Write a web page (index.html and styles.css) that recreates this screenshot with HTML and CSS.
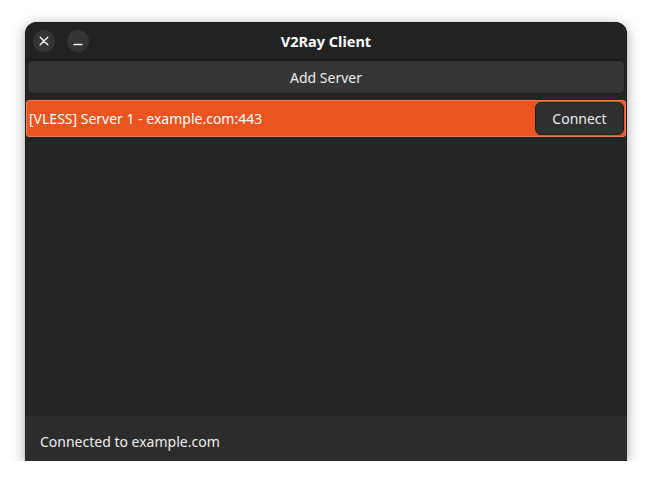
FILE: index.html
```html
<!DOCTYPE html>
<html>
<head>
<meta charset="utf-8">
<link rel="stylesheet" href="styles.css">
</head>
<body>
<div class="window">
  <header class="titlebar">
    <div class="controls">
      <button class="wbtn" aria-label="Close">
        <svg width="10" height="10" viewBox="0 0 10 10"><path d="M1.2 1.2L8.8 8.8M8.8 1.2L1.2 8.8" stroke="#f0f0f0" stroke-width="1.5" stroke-linecap="round"/></svg>
      </button>
      <button class="wbtn" aria-label="Minimize">
        <svg width="10" height="10" viewBox="0 0 10 10"><path d="M1 8.5H9" stroke="#f0f0f0" stroke-width="1.5" stroke-linecap="round"/></svg>
      </button>
    </div>
    <div class="title">V2Ray Client</div>
  </header>
  <main class="content">
    <button class="add-btn">Add Server</button>
    <div class="list">
      <div class="row selected">
        <span class="row-label">[VLESS] Server 1 - example.com:443</span>
        <button class="connect-btn">Connect</button>
      </div>
    </div>
  </main>
  <footer class="status">Connected to example.com</footer>
</div>
</body>
</html>
```
FILE: styles.css
```css
html, body {
  margin: 0;
  padding: 0;
  background: #ffffff;
}
body {
  padding: 22px 25px 0 25px;
  font-family: "Noto Sans", "DejaVu Sans", sans-serif;
  font-size: 14px;
  color: #ffffff;
}
.window {
  width: 602px;
  height: 439px;
  display: flex;
  flex-direction: column;
  background: #242424;
  border-radius: 12px 12px 0 0;
  box-shadow: 0 3px 14px rgba(0, 0, 0, 0.35), 0 0 1px rgba(0,0,0,0.4);
  overflow: hidden;
}
.titlebar {
  height: 37px;
  flex: none;
  background: #222222;
  border-bottom: 1px solid #181818;
  display: flex;
  align-items: center;
  position: relative;
}
.controls {
  display: flex;
  gap: 12px;
  padding-left: 8px;
}
.wbtn {
  width: 22px;
  height: 22px;
  border-radius: 50%;
  border: none;
  background: #343434;
  padding: 0;
  display: flex;
  align-items: center;
  justify-content: center;
}
.title {
  position: absolute;
  left: 0;
  right: 0;
  text-align: center;
  font-weight: bold;
  font-size: 14.5px;
  color: #ffffff;
  pointer-events: none;
}
.content {
  flex: 1;
  display: flex;
  flex-direction: column;
  padding: 0 1px;
}
.add-btn {
  margin: 0 1px;
  height: 34px;
  border: 1px solid #1b1b1b;
  border-radius: 6px;
  background: #363636;
  color: #ececec;
  font-family: inherit;
  font-size: 14px;
}
.list {
  margin-top: 6px;
  flex: 1;
}
.row {
  height: 37px;
  box-sizing: border-box;
  display: flex;
  align-items: center;
  justify-content: space-between;
  padding: 0 1px 0 2px;
  border-radius: 3px;
}
.row.selected {
  background: #e95420;
  border: 1px solid #f07a50;
}
.row-label {
  color: #ffffff;
}
.connect-btn {
  width: 89px;
  height: 33px;
  border: 1px solid #1e1e1e;
  border-radius: 6px;
  background: #303030;
  color: #ececec;
  font-family: inherit;
  font-size: 14px;
}
.status {
  flex: none;
  height: 45px;
  background: #2c2c2c;
  display: flex;
  align-items: center;
  padding-left: 15px;
  padding-top: 5px;
  box-sizing: border-box;
  color: #ececec;
}
```
